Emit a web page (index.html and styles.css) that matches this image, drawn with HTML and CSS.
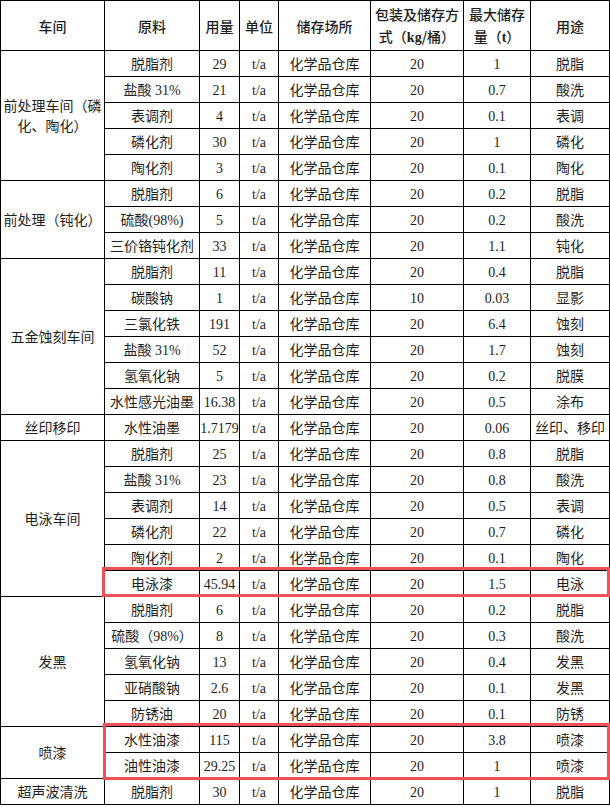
FILE: index.html
```html
<!DOCTYPE html>
<html lang="zh-CN">
<head>
<meta charset="utf-8">
<title>原料储存表</title>
<link rel="stylesheet" href="styles.css">
</head>
<body>
<div class="wrap">
<table class="tbl">
<colgroup>
<col class="c1"><col class="c2"><col class="c3"><col class="c4"><col class="c5"><col class="c6"><col class="c7"><col class="c8">
</colgroup>
<thead>
<tr class="head">
<th>车间</th><th>原料</th><th>用量</th><th>单位</th><th>储存场所</th><th>包装及储存方<br>式（<b class="lat">kg</b>/桶）</th><th>最大储存<br>量（<b class="lat">t</b>）</th><th>用途</th>
</tr>
</thead>
<tbody>
<tr><td rowspan="5">前处理车间（磷<br>化、陶化）</td><td>脱脂剂</td><td>29</td><td>t/a</td><td>化学品仓库</td><td>20</td><td>1</td><td>脱脂</td></tr>
<tr><td>盐酸 31%</td><td>21</td><td>t/a</td><td>化学品仓库</td><td>20</td><td>0.7</td><td>酸洗</td></tr>
<tr><td>表调剂</td><td>4</td><td>t/a</td><td>化学品仓库</td><td>20</td><td>0.1</td><td>表调</td></tr>
<tr><td>磷化剂</td><td>30</td><td>t/a</td><td>化学品仓库</td><td>20</td><td>1</td><td>磷化</td></tr>
<tr><td>陶化剂</td><td>3</td><td>t/a</td><td>化学品仓库</td><td>20</td><td>0.1</td><td>陶化</td></tr>

<tr><td rowspan="3">前处理（钝化）</td><td>脱脂剂</td><td>6</td><td>t/a</td><td>化学品仓库</td><td>20</td><td>0.2</td><td>脱脂</td></tr>
<tr><td>硫酸(98%)</td><td>5</td><td>t/a</td><td>化学品仓库</td><td>20</td><td>0.2</td><td>酸洗</td></tr>
<tr><td>三价铬钝化剂</td><td>33</td><td>t/a</td><td>化学品仓库</td><td>20</td><td>1.1</td><td>钝化</td></tr>

<tr><td rowspan="6">五金蚀刻车间</td><td>脱脂剂</td><td>11</td><td>t/a</td><td>化学品仓库</td><td>20</td><td>0.4</td><td>脱脂</td></tr>
<tr><td>碳酸钠</td><td>1</td><td>t/a</td><td>化学品仓库</td><td>10</td><td>0.03</td><td>显影</td></tr>
<tr><td>三氯化铁</td><td>191</td><td>t/a</td><td>化学品仓库</td><td>20</td><td>6.4</td><td>蚀刻</td></tr>
<tr><td>盐酸 31%</td><td>52</td><td>t/a</td><td>化学品仓库</td><td>20</td><td>1.7</td><td>蚀刻</td></tr>
<tr><td>氢氧化钠</td><td>5</td><td>t/a</td><td>化学品仓库</td><td>20</td><td>0.2</td><td>脱膜</td></tr>
<tr><td>水性感光油墨</td><td>16.38</td><td>t/a</td><td>化学品仓库</td><td>20</td><td>0.5</td><td>涂布</td></tr>

<tr><td>丝印移印</td><td>水性油墨</td><td>1.7179</td><td>t/a</td><td>化学品仓库</td><td>20</td><td>0.06</td><td>丝印、移印</td></tr>

<tr><td rowspan="6">电泳车间</td><td>脱脂剂</td><td>25</td><td>t/a</td><td>化学品仓库</td><td>20</td><td>0.8</td><td>脱脂</td></tr>
<tr><td>盐酸 31%</td><td>23</td><td>t/a</td><td>化学品仓库</td><td>20</td><td>0.8</td><td>酸洗</td></tr>
<tr><td>表调剂</td><td>14</td><td>t/a</td><td>化学品仓库</td><td>20</td><td>0.5</td><td>表调</td></tr>
<tr><td>磷化剂</td><td>22</td><td>t/a</td><td>化学品仓库</td><td>20</td><td>0.7</td><td>磷化</td></tr>
<tr><td>陶化剂</td><td>2</td><td>t/a</td><td>化学品仓库</td><td>20</td><td>0.1</td><td>陶化</td></tr>
<tr><td>电泳漆</td><td>45.94</td><td>t/a</td><td>化学品仓库</td><td>20</td><td>1.5</td><td>电泳</td></tr>

<tr><td rowspan="5">发黑</td><td>脱脂剂</td><td>6</td><td>t/a</td><td>化学品仓库</td><td>20</td><td>0.2</td><td>脱脂</td></tr>
<tr><td>硫酸（98%）</td><td>8</td><td>t/a</td><td>化学品仓库</td><td>20</td><td>0.3</td><td>酸洗</td></tr>
<tr><td>氢氧化钠</td><td>13</td><td>t/a</td><td>化学品仓库</td><td>20</td><td>0.4</td><td>发黑</td></tr>
<tr><td>亚硝酸钠</td><td>2.6</td><td>t/a</td><td>化学品仓库</td><td>20</td><td>0.1</td><td>发黑</td></tr>
<tr><td>防锈油</td><td>20</td><td>t/a</td><td>化学品仓库</td><td>20</td><td>0.1</td><td>防锈</td></tr>

<tr><td rowspan="2">喷漆</td><td>水性油漆</td><td>115</td><td>t/a</td><td>化学品仓库</td><td>20</td><td>3.8</td><td>喷漆</td></tr>
<tr><td>油性油漆</td><td>29.25</td><td>t/a</td><td>化学品仓库</td><td>20</td><td>1</td><td>喷漆</td></tr>

<tr><td>超声波清洗</td><td>脱脂剂</td><td>30</td><td>t/a</td><td>化学品仓库</td><td>20</td><td>1</td><td>脱脂</td></tr>
</tbody>
</table>
<div class="mark mark-a"></div>
<div class="mark mark-b"></div>
</div>
</body>
</html>
```

FILE: styles.css
```css
html, body {
  margin: 0;
  padding: 0;
  background: #ffffff;
}

.wrap {
  position: relative;
  width: 610px;
  padding: 0;
}

.tbl {
  border-collapse: collapse;
  table-layout: fixed;
  width: 609px;
  font-family: "Liberation Serif", "Noto Sans CJK SC", serif;
  font-size: 14px;
  color: #1e1e1e;
}

.c1 { width: 104px; }
.c2 { width: 95px; }
.c3 { width: 40px; }
.c4 { width: 39px; }
.c5 { width: 92px; }
.c6 { width: 93px; }
.c7 { width: 67px; }
.c8 { width: 79px; }

.tbl th,
.tbl td {
  border: 1px solid #000000;
  padding: 0;
  text-align: center;
  vertical-align: middle;
  white-space: nowrap;
  line-height: 20px;
}

.tbl th {
  font-family: "Noto Sans CJK SC", sans-serif;
  font-weight: 500;
  font-size: 14px;
  line-height: 22px;
}

.tbl .lat {
  font-family: "Liberation Serif", serif;
  font-weight: 700;
}

.head {
  height: 50px;
}

.tbl tbody tr {
  height: 26px;
}

.tbl tbody td {
  padding-top: 2px;
}

.mark {
  position: absolute;
  border: 3.5px solid #ef5157;
  box-sizing: border-box;
}

.mark-a {
  left: 102px;
  top: 567px;
  width: 508px;
  height: 30px;
}

.mark-b {
  left: 103px;
  top: 723px;
  width: 507px;
  height: 57px;
}
```
